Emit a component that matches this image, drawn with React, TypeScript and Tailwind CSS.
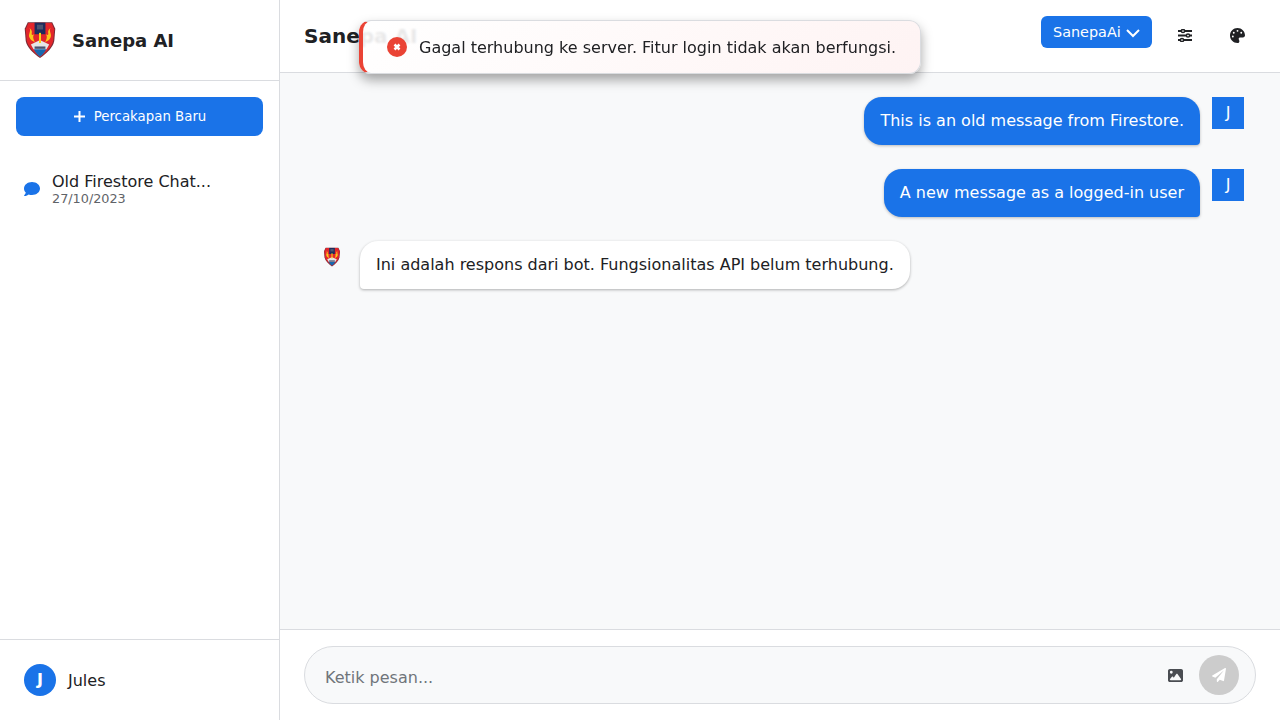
import { FaComment, FaPaperPlane } from "react-icons/fa";
import { FaImage, FaPalette } from "react-icons/fa6";

function Logo({ className }: { className: string }) {
  return (
    <svg viewBox="0 0 90 106" className={className}>
      <path d="M9 1 H81 L90 20 L87 56 C83 76 65 92 45 106 C25 92 7 76 3 56 L0 20 Z" fill="#7a2a35" />
      <path d="M11 3 H79 L87 21 L84 55 C80 74 63 89 45 103 C27 89 10 74 6 55 L3 21 Z" fill="#e2262b" />
      <path d="M29 2 H61 V36 H29 Z" fill="#1e2c5c" />
      <path d="M36 8 H54 V22 H36 Z" fill="#4a5470" />
      <path d="M14 18 C20 28 9 36 14 46 C17 54 24 56 30 60 C25 50 23 44 27 36 C22 40 19 38 21 32 C22 26 18 22 14 18 Z" fill="#fbc81a" />
      <path d="M76 18 C70 28 81 36 76 46 C73 54 66 56 60 60 C65 50 67 44 63 36 C68 40 71 38 69 32 C68 26 72 22 76 18 Z" fill="#fbc81a" />
      <path d="M24 74 C30 80 60 80 66 74 C60 88 54 96 45 102 C36 96 30 88 24 74 Z" fill="#1768ae" />
      <path d="M18 66 L44 54 H46 L72 66 L64 80 H26 Z" fill="#e6e6e6" />
      <path d="M42 32 H48 V62 H42 Z" fill="#fbd416" />
      <path d="M29 72 H61 V79 H29 Z" fill="#4a5470" />
    </svg>
  );
}

function SlidersIcon() {
  return (
    <svg viewBox="0 0 14 13" className="h-[13px] w-[14px]" fill="none" stroke="currentColor">
      <path d="M0 2h3.5M6.5 2H14M0 6.5h8.5M11.5 6.5H14M0 11h2.5M5.5 11H14" strokeWidth="1.8" />
      <circle cx="5" cy="2" r="1.6" strokeWidth="1.5" />
      <circle cx="10" cy="6.5" r="1.6" strokeWidth="1.5" />
      <circle cx="4" cy="11" r="1.6" strokeWidth="1.5" />
    </svg>
  );
}

const font = "font-['DejaVu_Sans',sans-serif]";

function UserMessage({ text }: { text: string }) {
  return (
    <div className="flex justify-end gap-3">
      <div className="rounded-[18px] rounded-br-[4px] bg-[#1a73e8] px-4 py-3 text-[16px] leading-6 text-white shadow-[0_1px_3px_rgba(0,0,0,0.25)]">{text}</div>
      <div className="flex h-8 w-8 items-center justify-center bg-[#1a73e8] text-[16px] text-white">J</div>
    </div>
  );
}

export default function App() {
  return (
    <div className={`${font} relative flex h-screen w-full overflow-hidden bg-white text-[#202124]`}>
      <aside className="flex w-[280px] shrink-0 flex-col border-r border-[#dadce0] bg-white">
        <div className="flex h-[81px] items-center gap-4 border-b border-[#dadce0] px-6">
          <Logo className="h-9 w-8" />
          <h1 className="text-[18px] font-bold">Sanepa AI</h1>
        </div>
        <div className="p-4">
          <button className="flex h-[39px] w-full items-center justify-center gap-2 rounded-lg bg-[#1a73e8] text-[13.33px] text-white">
            <svg viewBox="0 0 13 13" className="h-[13px] w-[13px]" stroke="currentColor" strokeWidth="2"><path d="M6.5 1v11M1 6.5h11" /></svg>
            Percakapan Baru
          </button>
        </div>
        <div className="flex-1 px-6 pt-5">
          <div className="flex items-center gap-3">
            <FaComment className="h-4 w-4 text-[#1a73e8]" />
            <div>
              <div className="text-[16px] leading-5">Old Firestore Chat...</div>
              <div className="text-[12.8px] leading-[14px] text-[#5f6368]">27/10/2023</div>
            </div>
          </div>
        </div>
        <div className="flex h-[81px] items-center gap-3 border-t border-[#dadce0] px-6">
          <div className="flex h-8 w-8 items-center justify-center rounded-full bg-[#1a73e8] font-bold text-white">J</div>
          <span className="pt-0.5 text-[16px]">Jules</span>
        </div>
      </aside>

      <main className="flex min-w-0 flex-1 flex-col bg-[#f8f9fa]">
        <header className="flex h-[73px] items-start justify-between border-b border-[#dadce0] bg-white px-6 pt-4">
          <h2 className="pt-[5px] text-[20px] leading-[30px] font-bold">Sanepa AI</h2>
          <div className="flex items-start gap-[14px]">
            <button className="flex h-8 w-[111px] items-center gap-[5px] rounded-md bg-[#1a73e8] px-3 pt-px text-[14.4px] text-white">
              SanepaAi
              <svg viewBox="0 0 14 14" className="h-3.5 w-3.5" fill="none" stroke="currentColor" strokeWidth="2"><path d="M1 4l6 6 6-6" /></svg>
            </button>
            <button className="flex h-[38px] w-[38px] items-center justify-center"><SlidersIcon /></button>
            <button className="flex h-[38px] w-[38px] items-center justify-center"><FaPalette className="h-[15px] w-[15px]" /></button>
          </div>
        </header>

        <div className="flex flex-1 flex-col gap-6 px-9 py-6">
          <UserMessage text="This is an old message from Firestore." />
          <UserMessage text="A new message as a logged-in user" />
          <div className="flex items-start gap-5 pl-[8px]">
            <Logo className="mt-1.5 h-5 w-4" />
            <div className="rounded-[18px] rounded-bl-[4px] bg-white px-4 py-3 text-[16px] leading-6 shadow-[0_1px_3px_rgba(0,0,0,0.3)]">
              Ini adalah respons dari bot. Fungsionalitas API belum terhubung.
            </div>
          </div>
        </div>

        <div className="h-[91px] border-t border-[#dadce0] bg-white px-6 pt-4">
          <div className="flex h-[58px] items-center rounded-[29px] border border-[#dadce0] bg-[#f8f9fa] pr-4 pl-5">
            <span className="flex-1 pt-1.5 text-[16px] text-[#70757a]">Ketik pesan...</span>
            <FaImage className="mr-4 h-[15px] w-[15px] text-[#4a4d52]" />
            <button className="flex h-10 w-10 items-center justify-center rounded-full bg-[#cccccc] text-white"><FaPaperPlane className="h-3.5 w-3.5" /></button>
          </div>
        </div>
      </main>

      <div className="absolute top-5 left-1/2 flex h-[54px] w-[562px] -translate-x-1/2 items-center gap-3 rounded-xl border border-[#dadce0] border-l-4 border-l-[#ea4335] bg-[linear-gradient(135deg,rgba(255,255,255,0.9),rgba(254,242,242,0.9))] pl-6 shadow-[0_6px_12px_rgba(0,0,0,0.35)] backdrop-blur-[1px]">
        <svg viewBox="0 0 20 20" className="h-5 w-5">
          <circle cx="10" cy="10" r="10" fill="#ea4335" />
          <path d="M7.5 7.5l5 5M12.5 7.5l-5 5" stroke="#fff" strokeWidth="2.5" />
        </svg>
        <span className="pt-px text-[16px]">Gagal terhubung ke server. Fitur login tidak akan berfungsi.</span>
      </div>
    </div>
  );
}
